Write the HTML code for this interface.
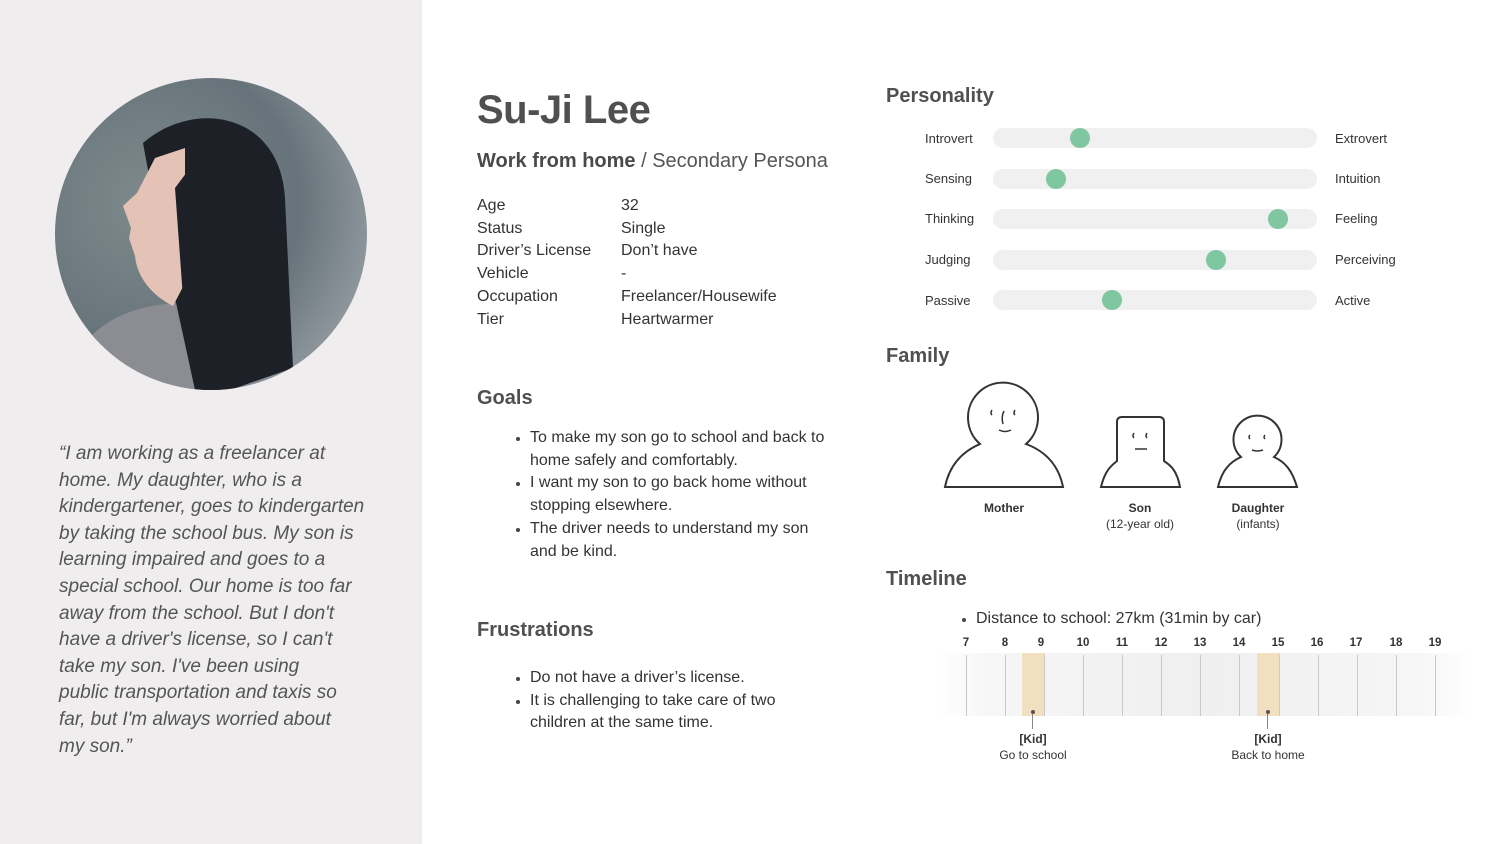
<!DOCTYPE html>
<html><head><meta charset="utf-8"><style>
*{margin:0;padding:0;box-sizing:border-box}
body{width:1500px;height:844px;position:relative;background:#fff;font-family:"Liberation Sans",sans-serif;color:#444;overflow:hidden}
.abs{position:absolute}
#left{left:0;top:0;width:422px;height:844px;background:#efeded}
.quote{left:59px;top:441px;width:340px;font-size:19px;line-height:26.6px;font-style:italic;color:#555;white-space:nowrap}
h1{position:absolute;left:477px;top:88px;font-size:40px;font-weight:bold;color:#505050;letter-spacing:-0.5px}
.sub{left:477px;top:150px;font-size:20px;color:#555}
.sub b{color:#4a4a4a}
.tbl{left:477px;top:195px;font-size:16px;line-height:22.7px;color:#333}
.tbl div{display:flex}.tbl span{width:144px}
h2{position:absolute;font-size:20px;font-weight:bold;color:#505050}
ul{position:absolute;font-size:16px;line-height:22.7px;color:#333;list-style:none}
ul li{position:relative;padding-left:14px}
ul li:before{content:"";position:absolute;left:0;top:10px;width:4px;height:4px;border-radius:50%;background:#444}
.pl{font-size:13px;color:#333}
.bar{position:absolute;left:993px;width:324px;height:20px;border-radius:10px;background:#f0f0f0}
.knob{position:absolute;width:20px;height:20px;border-radius:50%;background:#7fc7a0}
.fam{font-size:12px;color:#333;text-align:center;line-height:16px}
.hr{font-size:11.5px;font-weight:bold;color:#333;width:30px;margin-left:-15px;text-align:center}
.tick{width:1px;background:#c8c8c8;top:655px;height:61px}
</style></head><body>
<div id="left" class="abs"></div>
<svg class="abs" style="left:55px;top:78px" width="312" height="312" viewBox="0 0 312 312">
<defs><clipPath id="c"><circle cx="156" cy="156" r="156"/></clipPath>
<radialGradient id="bg" cx="0.3" cy="0.4" r="0.8"><stop offset="0" stop-color="#7e8a8c"/><stop offset="0.6" stop-color="#66737a"/><stop offset="1" stop-color="#9aa1a6"/></radialGradient></defs>
<g clip-path="url(#c)">
<rect width="312" height="312" fill="url(#bg)"/>
<path d="M30 265 C60 228 110 222 160 226 L175 312 L55 312 Z" fill="#8b8d92"/>
<path d="M88 65 C140 20 225 35 230 120 L238 290 L175 312 L140 312 L120 220 L100 130 Z" fill="#1e2027"/>
<path d="M100 80 L130 70 L130 205 L118 228 C98 218 82 200 80 178 L74 160 L76 150 L68 128 L82 115 Z" fill="#e4c3b6"/>
<path d="M120 110 L135 90 L150 200 L140 240 L128 220 Z" fill="#1e2027"/>
</g></svg>
<div class="abs quote">“I am working as a freelancer at<br>home. My daughter, who is a<br>kindergartener, goes to kindergarten<br>by taking the school bus. My son is<br>learning impaired and goes to a<br>special school. Our home is too far<br>away from the school. But I don't<br>have a driver's license, so I can't<br>take my son. I've been using<br>public transportation and taxis so<br>far, but I'm always worried about<br>my son.”</div>

<h1>Su-Ji Lee</h1>
<div class="abs sub"><b>Work from home</b> / Secondary Persona</div>
<div class="abs tbl">
<div><span>Age</span>32</div><div><span>Status</span>Single</div><div><span>Driver’s License</span>Don’t have</div><div><span>Vehicle</span>-</div><div><span>Occupation</span>Freelancer/Housewife</div><div><span>Tier</span>Heartwarmer</div>
</div>
<h2 style="left:477px;top:387px">Goals</h2>
<ul style="left:516px;top:427px;width:320px">
<li>To make my son go to school and back to home safely and comfortably.</li>
<li>I want my son to go back home without stopping elsewhere.</li>
<li>The driver needs to understand my son and be kind.</li></ul>
<h2 style="left:477px;top:619px">Frustrations</h2>
<ul style="left:516px;top:667px;width:290px">
<li>Do not have a driver’s license.</li>
<li>It is challenging to take care of two children at the same time.</li></ul>

<h2 style="left:886px;top:85px">Personality</h2>
<div class="abs pl" style="left:925px;top:131px">Introvert</div><div class="abs pl" style="left:1335px;top:131px">Extrovert</div>
<div class="bar" style="top:128px"></div><div class="knob" style="left:1070px;top:128px"></div>
<div class="abs pl" style="left:925px;top:171px">Sensing</div><div class="abs pl" style="left:1335px;top:171px">Intuition</div>
<div class="bar" style="top:169px"></div><div class="knob" style="left:1046px;top:169px"></div>
<div class="abs pl" style="left:925px;top:211px">Thinking</div><div class="abs pl" style="left:1335px;top:211px">Feeling</div>
<div class="bar" style="top:209px"></div><div class="knob" style="left:1268px;top:209px"></div>
<div class="abs pl" style="left:925px;top:252px">Judging</div><div class="abs pl" style="left:1335px;top:252px">Perceiving</div>
<div class="bar" style="top:250px"></div><div class="knob" style="left:1206px;top:250px"></div>
<div class="abs pl" style="left:925px;top:293px">Passive</div><div class="abs pl" style="left:1335px;top:293px">Active</div>
<div class="bar" style="top:290px"></div><div class="knob" style="left:1102px;top:290px"></div>

<h2 style="left:886px;top:345px">Family</h2>
<svg class="abs" style="left:930px;top:370px" width="400" height="130" viewBox="0 0 400 130" fill="none" stroke="#333" stroke-width="2">
<path d="M15 117 C20 92 36 80 50 74 A35 35 0 1 1 96 74 C112 80 128 92 133 117 Z"/>
<path d="M62 40 Q60 43 62 45 M74 41 Q71 47 73 54 M85 40 Q83 43 85 45 M69 60 Q75 63 81 60" stroke-width="1.5"/>
<path d="M171 117 C175 100 182 95 187 91 L187 52 Q187 47 192 47 L229 47 Q234 47 234 52 L234 91 C240 95 247 100 250 117 Z"/>
<path d="M204 63 Q202 66 204 68 M217 63 Q215 66 217 68 M205 79 L217 79" stroke-width="1.5"/>
<path d="M288 117 C292 100 300 92 311 87 A24 24 0 1 1 344 87 C355 92 362 100 367 117 Z"/>
<path d="M320 65 Q318 67 320 69 M335 65 Q333 67 335 69 M322 80 Q327 82 333 80" stroke-width="1.5"/>
</svg>
<div class="abs fam" style="left:964px;top:500px;width:80px"><b>Mother</b></div>
<div class="abs fam" style="left:1090px;top:500px;width:100px"><b>Son</b><br>(12-year old)</div>
<div class="abs fam" style="left:1208px;top:500px;width:100px"><b>Daughter</b><br>(infants)</div>

<h2 style="left:886px;top:568px">Timeline</h2>
<ul style="left:962px;top:608px;width:400px;font-size:16px"><li>Distance to school: 27km (31min by car)</li></ul>
<div class="abs" style="left:937px;top:653px;width:535px;height:63px;background:linear-gradient(90deg,#fff 0%,#f6f6f6 10%,#efefef 50%,#f6f6f6 90%,#fff 100%)"></div>
<div class="abs" style="left:1022px;top:653px;width:23px;height:63px;background:#f2dfc0"></div>
<div class="abs" style="left:1257px;top:653px;width:23px;height:63px;background:#f2dfc0"></div>
<div class="abs tick" style="left:966px"></div><div class="abs tick" style="left:1005px"></div><div class="abs tick" style="left:1044px"></div><div class="abs tick" style="left:1083px"></div><div class="abs tick" style="left:1122px"></div><div class="abs tick" style="left:1161px"></div><div class="abs tick" style="left:1200px"></div><div class="abs tick" style="left:1239px"></div><div class="abs tick" style="left:1279px"></div><div class="abs tick" style="left:1318px"></div><div class="abs tick" style="left:1357px"></div><div class="abs tick" style="left:1396px"></div><div class="abs tick" style="left:1435px"></div>
<div class="abs hr" style="left:966px;top:637px">7</div><div class="abs hr" style="left:1005px;top:637px">8</div><div class="abs hr" style="left:1041px;top:637px">9</div><div class="abs hr" style="left:1083px;top:637px">10</div><div class="abs hr" style="left:1122px;top:637px">11</div><div class="abs hr" style="left:1161px;top:637px">12</div><div class="abs hr" style="left:1200px;top:637px">13</div><div class="abs hr" style="left:1239px;top:637px">14</div><div class="abs hr" style="left:1278px;top:637px">15</div><div class="abs hr" style="left:1317px;top:637px">16</div><div class="abs hr" style="left:1356px;top:637px">17</div><div class="abs hr" style="left:1396px;top:637px">18</div><div class="abs hr" style="left:1435px;top:637px">19</div>
<div class="abs" style="left:1031px;top:710px;width:4px;height:4px;border-radius:50%;background:#555"></div>
<div class="abs" style="left:1032px;top:714px;width:1px;height:15px;background:#888"></div>
<div class="abs" style="left:1266px;top:710px;width:4px;height:4px;border-radius:50%;background:#555"></div>
<div class="abs" style="left:1267px;top:714px;width:1px;height:15px;background:#888"></div>
<div class="abs fam" style="left:983px;top:731px;width:100px"><b>[Kid]</b><br>Go to school</div>
<div class="abs fam" style="left:1218px;top:731px;width:100px"><b>[Kid]</b><br>Back to home</div>
</body></html>
